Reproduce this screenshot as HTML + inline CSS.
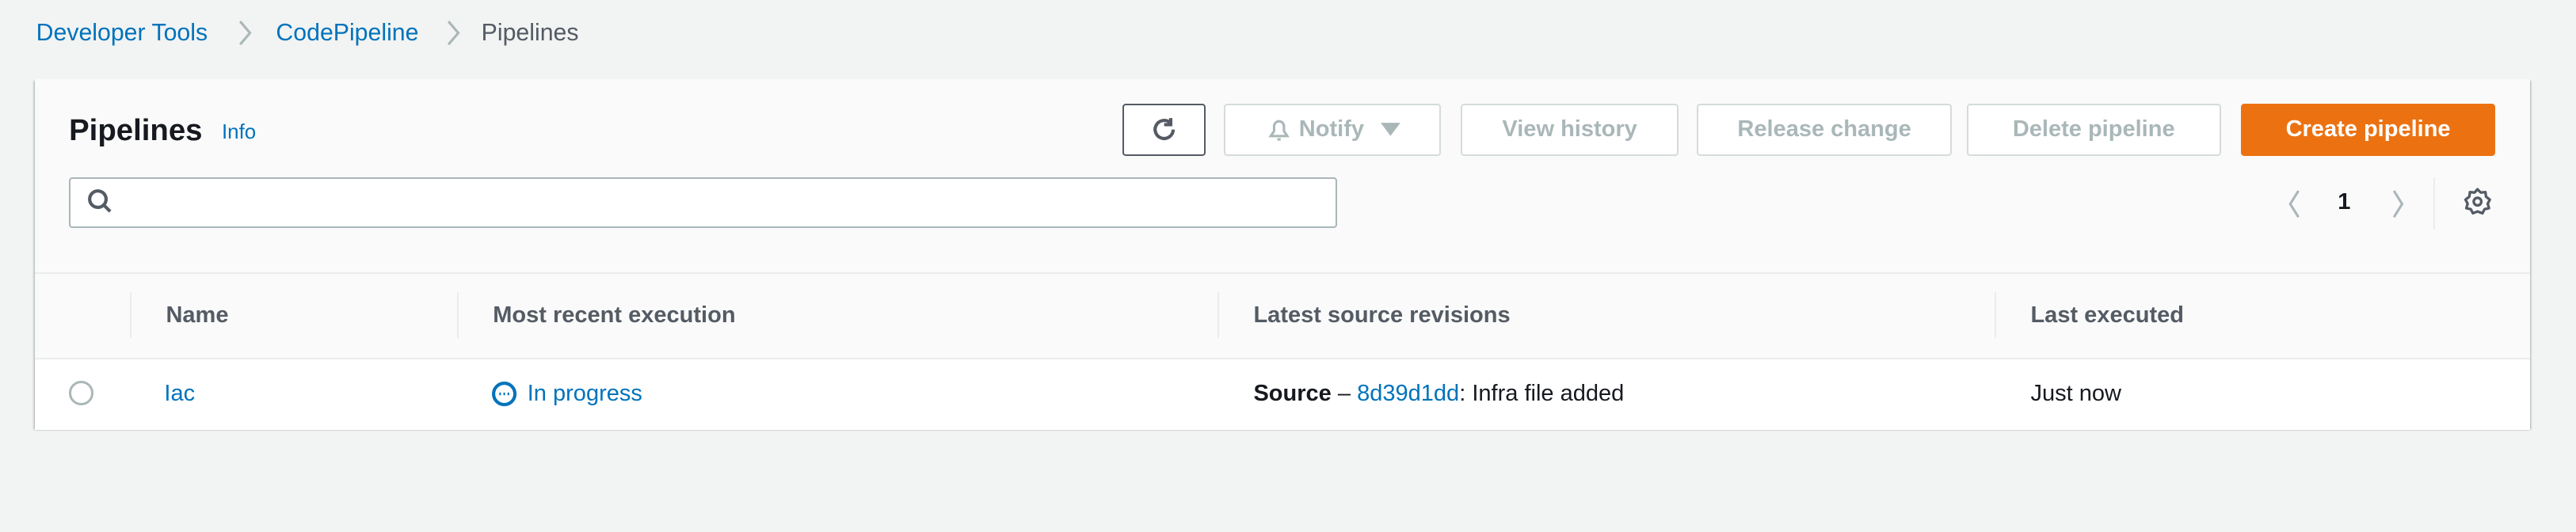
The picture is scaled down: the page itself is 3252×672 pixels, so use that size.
<!DOCTYPE html>
<html><head><style>
html,body{margin:0;padding:0;background:#f2f3f3;width:3252px;height:672px;overflow:hidden}
#w{zoom:2.074;width:1568px;height:324px;position:relative;font-family:"Liberation Sans",sans-serif;font-size:14px;color:#16191f}
.a{position:absolute;white-space:nowrap}
.bl{color:#0073bb}
.card{position:absolute;left:21px;top:48px;width:1519px;height:213px;background:#fafafa;box-shadow:0 1px 1px 0 rgba(0,28,36,.3),1px 1px 1px 0 rgba(0,28,36,.15),-1px 1px 1px 0 rgba(0,28,36,.15)}
.btn{position:absolute;top:63px;height:30px;border:1px solid #d5dbdb;border-radius:2px;background:#fff;color:#aab7b8;font-weight:bold;font-size:14px;display:flex;align-items:center;justify-content:center;box-sizing:content-box}
.th{position:absolute;top:184px;font-weight:bold;color:#545b64}
.dv{position:absolute;top:178px;width:1px;height:28px;background:#eaeded}
</style></head><body><div id="w">
<div class="a bl" style="left:22px;top:12px;font-size:14.6px">Developer Tools</div>
<svg class="a" style="left:144px;top:12px" width="10" height="16"><path d="M2 1l6 7-6 7" fill="none" stroke="#aab7b8" stroke-width="1.5"/></svg>
<div class="a bl" style="left:168px;top:12px;font-size:14.6px">CodePipeline</div>
<svg class="a" style="left:271px;top:12px" width="10" height="16"><path d="M2 1l6 7-6 7" fill="none" stroke="#aab7b8" stroke-width="1.5"/></svg>
<div class="a" style="left:293px;top:12px;color:#545b64;font-size:14.6px">Pipelines</div>

<div class="card"></div>
<div class="a" style="left:21px;top:166px;width:1519px;height:1px;background:#eaeded"></div>
<div class="a" style="left:21px;top:218px;width:1519px;height:43px;background:#fff;border-top:1px solid #eaeded"></div>

<div class="a" style="left:42px;top:69px;font-size:18.5px;font-weight:bold">Pipelines</div>
<div class="a bl" style="left:135px;top:74px;font-size:12.5px">Info</div>

<div class="btn" style="left:683px;width:49px;border-color:#545b64"><svg width="18" height="18" viewBox="0 0 18 18"><path d="M14.5 9a5.5 5.5 0 1 1-2-4.3" fill="none" stroke="#545b64" stroke-width="2"/><path d="M13 2v4H9" fill="none" stroke="#545b64" stroke-width="2"/></svg></div>
<div class="btn" style="left:745px;width:130px"><svg width="18" height="16" viewBox="0 0 18 16" style="margin-right:3px"><path d="M4 12h10l-2-3V6a3 3 0 0 0-6 0v3z M8 14h2" fill="none" stroke="#aab7b8" stroke-width="1.5"/></svg>Notify<svg width="12" height="10" style="margin-left:10px"><path d="M0 1h12L6 9z" fill="#aab7b8"/></svg></div>
<div class="btn" style="left:889px;width:131px">View history</div>
<div class="btn" style="left:1033px;width:153px">Release change</div>
<div class="btn" style="left:1197px;width:153px">Delete pipeline</div>
<div class="btn" style="left:1364px;width:153px;background:#ec7211;border-color:#ec7211;color:#fff">Create pipeline</div>

<div class="a" style="left:42px;top:108px;width:770px;height:29px;border:1px solid #aab7b8;border-radius:2px;background:#fff"></div>
<svg class="a" style="left:52px;top:114px" width="18" height="18" viewBox="0 0 18 18"><circle cx="7.5" cy="7.5" r="5" fill="none" stroke="#545b64" stroke-width="2"/><path d="M11 11l4 4" stroke="#545b64" stroke-width="2"/></svg>

<svg class="a" style="left:1391px;top:115px" width="10" height="18"><path d="M8 1L3 9l5 8" fill="none" stroke="#aab7b8" stroke-width="1.5"/></svg>
<div class="a" style="left:1423px;top:115px;font-weight:bold">1</div>
<svg class="a" style="left:1455px;top:115px" width="10" height="18"><path d="M2 1l5 8-5 8" fill="none" stroke="#aab7b8" stroke-width="1.5"/></svg>
<div class="a" style="left:1481px;top:108px;width:1px;height:32px;background:#eaeded"></div>
<svg class="a" style="left:1499px;top:114px" width="18" height="18" viewBox="0 0 18 18"><path d="M9 1.5l2 2 2.8-.3.4 2.8 2.3 1.8-1.3 2.5.8 2.7-2.7.6-1.3 2.5L9 15l-2.8 1.1-1.3-2.5-2.7-.6.8-2.7L1.7 7.8 4 6l.4-2.8 2.8.3z" fill="none" stroke="#545b64" stroke-width="1.6" stroke-linejoin="round"/><circle cx="9" cy="9" r="2.3" fill="none" stroke="#545b64" stroke-width="1.6"/></svg>

<div class="dv" style="left:79px"></div><div class="dv" style="left:278px"></div><div class="dv" style="left:741px"></div><div class="dv" style="left:1214px"></div>
<div class="th" style="left:101px">Name</div>
<div class="th" style="left:300px">Most recent execution</div>
<div class="th" style="left:763px">Latest source revisions</div>
<div class="th" style="left:1236px">Last executed</div>

<div class="a" style="left:42px;top:232px;width:12px;height:12px;border:1.5px solid #aab7b8;border-radius:50%;background:#fff"></div>
<div class="a bl" style="left:100px;top:232px">Iac</div>
<svg class="a" style="left:299px;top:232px" width="16" height="16" viewBox="0 0 16 16"><circle cx="8" cy="8" r="6.5" fill="none" stroke="#0073bb" stroke-width="2"/><path d="M5 8h1M7.5 8h1M10 8h1" stroke="#0073bb" stroke-width="1.6"/></svg>
<div class="a bl" style="left:321px;top:232px">In progress</div>
<div class="a" style="left:763px;top:232px"><b>Source</b> – <span class="bl">8d39d1dd</span>: Infra file added</div>
<div class="a" style="left:1236px;top:232px">Just now</div>
</div></body></html>
